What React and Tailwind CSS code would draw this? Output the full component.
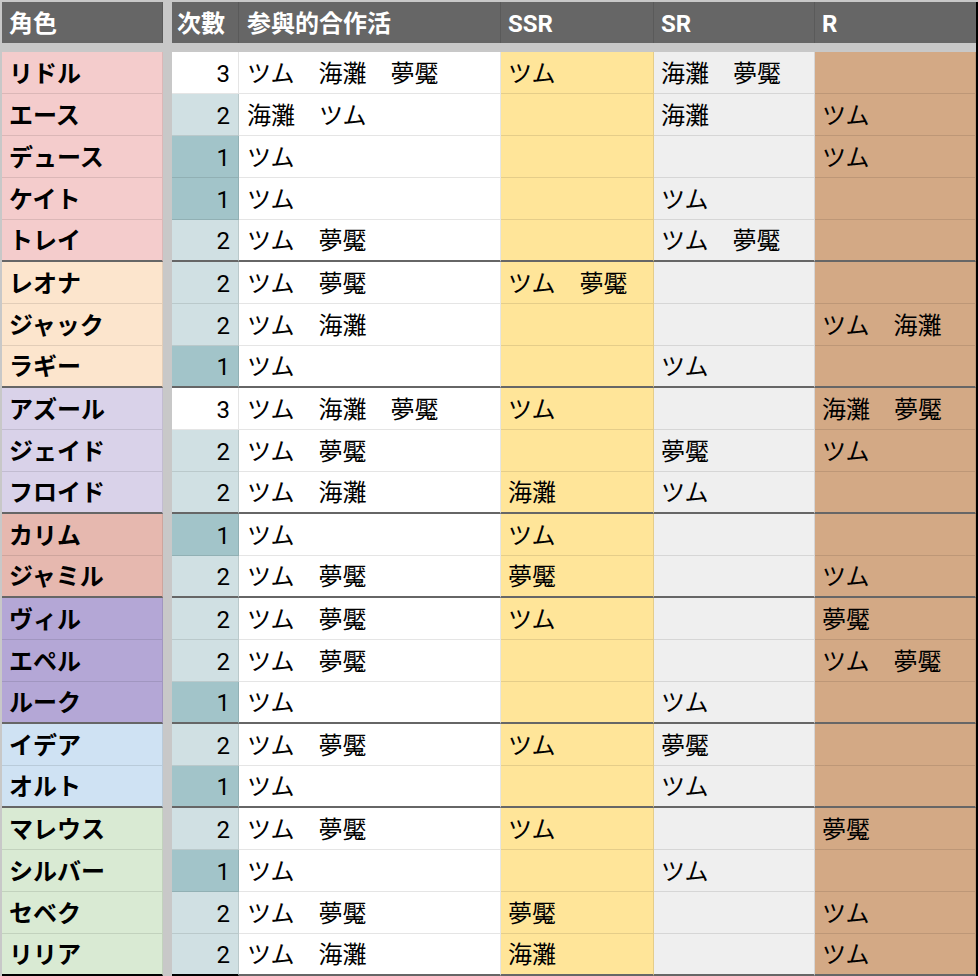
import React from 'react';

const groups = {
    heart: 'bg-[#f4cccc]',
    savana: 'bg-[#fce5cd]',
    octa: 'bg-[#d9d2e9]',
    scara: 'bg-[#e6b8af]',
    pome: 'bg-[#b4a7d6]',
    igni: 'bg-[#cfe2f3]',
    dia: 'bg-[#d9ead3]',
};

const countBg = {
    1: 'bg-[#a2c4c9]',
    2: 'bg-[#d0e0e3]',
    3: 'bg-white',
};

// name, group, count, participated, SSR, SR, R, last row of group
const rows = [
    ['リドル', 'heart', 3, 'ツム　海灘　夢魘', 'ツム', '海灘　夢魘', ''],
    ['エース', 'heart', 2, '海灘　ツム', '', '海灘', 'ツム'],
    ['デュース', 'heart', 1, 'ツム', '', '', 'ツム'],
    ['ケイト', 'heart', 1, 'ツム', '', 'ツム', ''],
    ['トレイ', 'heart', 2, 'ツム　夢魘', '', 'ツム　夢魘', '', true],
    ['レオナ', 'savana', 2, 'ツム　夢魘', 'ツム　夢魘', '', ''],
    ['ジャック', 'savana', 2, 'ツム　海灘', '', '', 'ツム　海灘'],
    ['ラギー', 'savana', 1, 'ツム', '', 'ツム', '', true],
    ['アズール', 'octa', 3, 'ツム　海灘　夢魘', 'ツム', '', '海灘　夢魘'],
    ['ジェイド', 'octa', 2, 'ツム　夢魘', '', '夢魘', 'ツム'],
    ['フロイド', 'octa', 2, 'ツム　海灘', '海灘', 'ツム', '', true],
    ['カリム', 'scara', 1, 'ツム', 'ツム', '', ''],
    ['ジャミル', 'scara', 2, 'ツム　夢魘', '夢魘', '', 'ツム', true],
    ['ヴィル', 'pome', 2, 'ツム　夢魘', 'ツム', '', '夢魘'],
    ['エペル', 'pome', 2, 'ツム　夢魘', '', '', 'ツム　夢魘'],
    ['ルーク', 'pome', 1, 'ツム', '', 'ツム', '', true],
    ['イデア', 'igni', 2, 'ツム　夢魘', 'ツム', '夢魘', ''],
    ['オルト', 'igni', 1, 'ツム', '', 'ツム', '', true],
    ['マレウス', 'dia', 2, 'ツム　夢魘', 'ツム', '', '夢魘'],
    ['シルバー', 'dia', 1, 'ツム', '', 'ツム', ''],
    ['セベク', 'dia', 2, 'ツム　夢魘', '夢魘', '', 'ツム'],
    ['リリア', 'dia', 2, 'ツム　海灘', '海灘', '', 'ツム', true],
];

const Cell = ({ className = '', last, end, children }) => (
    <div
        className={`flex items-center h-full pt-[2px] border-r border-black/10 
                    ${last
                        ? `border-b-2 ${end ? 'border-b-black' : 'border-b-[#666666]'}`
                        : 'border-b border-b-black/10'} ${className}`}
    >
        {children}
    </div>
);

const App = () => {
    return (
        <div className="w-[978px] h-[976px] overflow-hidden bg-[#c8c8c8] pt-[2px] pl-[2px] font-['Roboto','Noto_Sans_CJK_JP',sans-serif] text-[24px] leading-none text-black">
            <div className="w-[976px] h-full border-r-2 border-black">
                {/* Header */}
                <div className="flex h-[41px] text-white font-bold">
                    <div className="w-[161px] bg-[#666666] flex items-center pt-[3px] pl-[7px] border-r border-[#5a5a5a]">角色</div>
                    <div className="w-[9px]" />
                    <div className="w-[67px] bg-[#666666] flex items-center pt-[3px] pl-[5px] border-r border-[#5a5a5a]">次數</div>
                    <div className="w-[262px] bg-[#666666] flex items-center pt-[3px] pl-[8px] border-r border-[#5a5a5a]">参與的合作活</div>
                    <div className="w-[153px] bg-[#666666] flex items-center pt-[3px] pl-[7px] border-r border-[#5a5a5a]">SSR</div>
                    <div className="w-[161px] bg-[#666666] flex items-center pt-[3px] pl-[7px] border-r border-[#5a5a5a]">SR</div>
                    <div className="flex-1 bg-[#666666] flex items-center pt-[3px] pl-[7px]">R</div>
                </div>
                <div className="h-[9px]" />

                {/* Body */}
                {rows.map(([name, group, count, joined, ssr, sr, r, last], i) => {
                    const end = i === rows.length - 1;
                    return (
                        <div key={name} className="flex h-[42px]">
                            <Cell last={last} end={end} className={`w-[161px] pl-[7px] font-bold ${groups[group]}`}>{name}</Cell>
                            <div className="w-[9px]" />
                            <Cell last={last} end={end} className={`w-[67px] justify-end pr-[8px] ${countBg[count]}`}>{count}</Cell>
                            <Cell last={last} className="w-[262px] pl-[8px] bg-white">{joined}</Cell>
                            <Cell last={last} className="w-[153px] pl-[7px] bg-[#ffe599]">{ssr}</Cell>
                            <Cell last={last} className="w-[161px] pl-[7px] bg-[#efefef]">{sr}</Cell>
                            <Cell last={last} className="flex-1 pl-[7px] bg-[#d3a985]">{r}</Cell>
                        </div>
                    );
                })}
            </div>
        </div>
    );
};

export default App;
